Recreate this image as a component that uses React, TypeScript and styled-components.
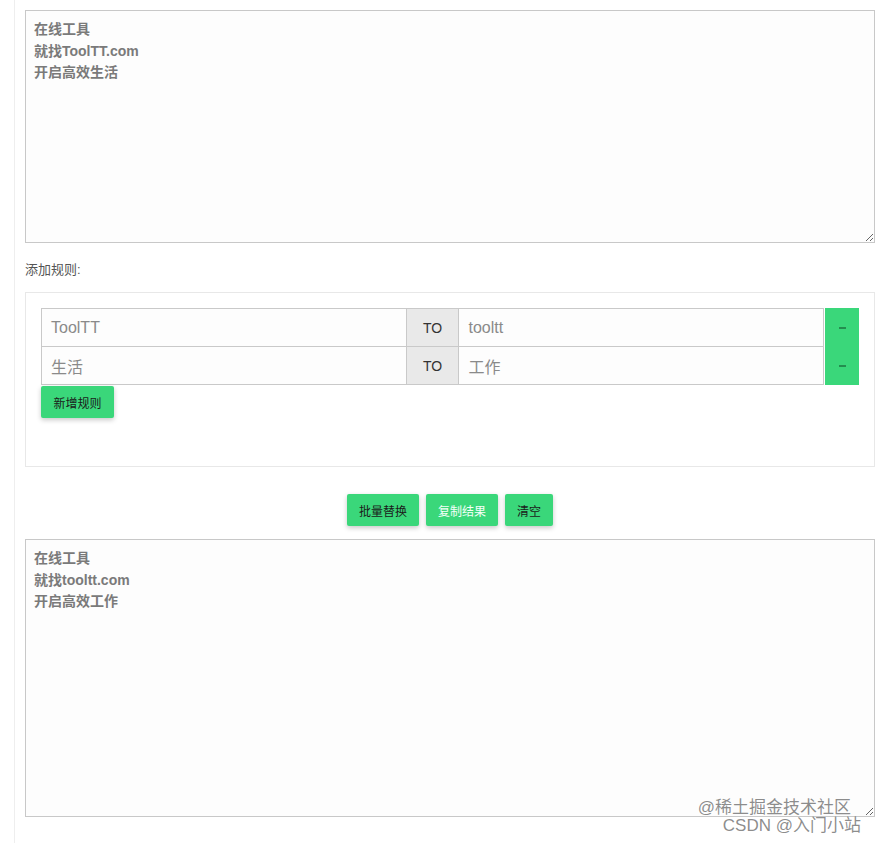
import React from "react";
import styled, { createGlobalStyle } from "styled-components";

const Global = createGlobalStyle`
  html, body { margin: 0; padding: 0; background: #fff; }
  body { font-family: "Helvetica Neue", "Liberation Sans", "Noto Sans CJK SC", sans-serif; }
  * { box-sizing: border-box; }
`;

const Page = styled.div`
  margin-left: 14px;
  border-left: 1px solid #eeeeee;
  padding: 10px 0 0 10px;
  width: 861px;
  min-height: 843px;
  position: relative;
  overflow: hidden;
`;

const TextArea = styled.textarea<{ $h: number }>`
  display: block;
  width: 850px;
  height: ${(p) => p.$h}px;
  border: 1px solid #c8c8c8;
  background: #fdfdfd;
  padding: 8px 8px;
  font-family: "Helvetica Neue", "Liberation Sans", "Noto Sans CJK SC", sans-serif;
  font-size: 14px;
  font-weight: 600;
  line-height: 21.5px;
  color: #7a7a7a;
  margin: 0;
  resize: both;
  outline: none;
`;

const Label = styled.div`
  font-size: 13px;
  color: #555;
  margin: 19px 0 14px;
  line-height: 16px;
`;

const Card = styled.div`
  width: 850px;
  height: 175px;
  border: 1px solid #e8e8e8;
  padding: 15px 15px 0 15px;
`;

const Row = styled.div`
  display: flex;
  height: 39px;
  margin-bottom: -1px;
`;

const Field = styled.div`
  width: 366px;
  height: 39px;
  border: 1px solid #c9c9c9;
  background: #fdfdfd;
  color: #8a8a8a;
  font-size: 16px;
  display: flex;
  align-items: center;
  padding-left: 9px;
`;

const To = styled.div`
  width: 54px;
  height: 39px;
  margin: 0 -1px;
  border: 1px solid #c9c9c9;
  background: #e9e9e9;
  color: #333;
  font-size: 14px;
  display: flex;
  align-items: center;
  justify-content: center;
  position: relative;
  z-index: 1;
`;

const Minus = styled.div`
  width: 34px;
  height: 39px;
  background: #3ad77a;
  display: flex;
  align-items: center;
  justify-content: center;
  margin-left: 1px;
`;

const Dash = styled.span`
  display: block;
  width: 7px;
  height: 2px;
  background: #1f7a45;
  opacity: 0.8;
`;

const GreenButton = styled.button<{ $w: number; $light?: boolean }>`
  width: ${(p) => p.$w}px;
  height: 32px;
  border: none;
  border-radius: 2px;
  background: #3ad77a;
  color: ${(p) => (p.$light ? "#f4fff8" : "#1b1b1b")};
  font-family: inherit;
  font-size: 12px;
  padding: 0;
  box-shadow: 0 2px 5px rgba(0, 0, 0, 0.22);
  cursor: pointer;
`;

const AddWrap = styled.div`
  margin-top: 2px;
`;

const Actions = styled.div`
  display: flex;
  justify-content: center;
  gap: 7px;
  padding: 27px 0 13px;
  width: 850px;
`;

const Watermark = styled.div`
  position: absolute;
  right: 14px;
  bottom: 8px;
  text-align: right;
  font-family: "Liberation Sans", "Noto Sans CJK SC", sans-serif;
  font-size: 17px;
  line-height: 18px;
  color: rgba(120, 120, 120, 0.85);
  pointer-events: none;
`;

const WmLine = styled.div<{ $shift: number }>`
  margin-right: ${(p) => p.$shift}px;
`;

const rules = [
  { from: "ToolTT", to: "tooltt" },
  { from: "生活", to: "工作" },
];

export default function App() {
  return (
    <>
      <Global />
      <Page>
        <TextArea $h={233} defaultValue={"在线工具\n就找ToolTT.com\n开启高效生活"} />
        <Label>添加规则:</Label>
        <Card>
          {rules.map((r) => (
            <Row key={r.from}>
              <Field>{r.from}</Field>
              <To>TO</To>
              <Field>{r.to}</Field>
              <Minus>
                <Dash />
              </Minus>
            </Row>
          ))}
          <AddWrap>
            <GreenButton $w={73}>新增规则</GreenButton>
          </AddWrap>
        </Card>
        <Actions>
          <GreenButton $w={72}>批量替换</GreenButton>
          <GreenButton $w={72} $light>复制结果</GreenButton>
          <GreenButton $w={48}>清空</GreenButton>
        </Actions>
        <TextArea $h={278} defaultValue={"在线工具\n就找tooltt.com\n开启高效工作"} />
        <Watermark>
          <WmLine $shift={10}>@稀土掘金技术社区</WmLine>
          <WmLine $shift={0}>CSDN @入门小站</WmLine>
        </Watermark>
      </Page>
    </>
  );
}
